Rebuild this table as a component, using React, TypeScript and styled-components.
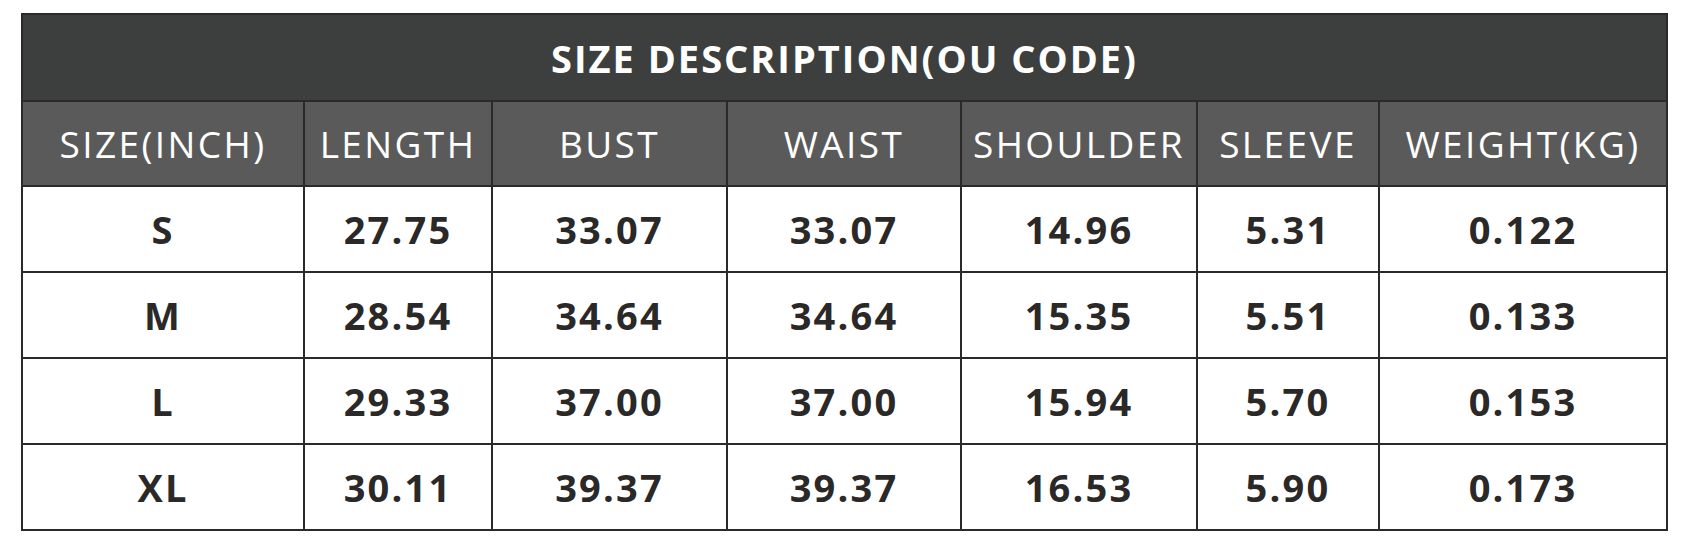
import styled, { createGlobalStyle } from 'styled-components'

const GlobalStyle = createGlobalStyle`
  html, body {
    margin: 0;
    padding: 0;
    background: #fff;
  }
  body {
    font-family: "Open Sans", "Liberation Sans", sans-serif;
  }
`

const Page = styled.div`
  padding: 13px 0 0 21px;
`

const Table = styled.table`
  border-collapse: collapse;
  table-layout: fixed;
  width: 1645px;
  border: 2px solid #2a2a2a;
`

const TitleCell = styled.th`
  height: 85px;
  padding: 0;
  background: #3c3f3d;
  color: #fff;
  font-size: 38px;
  font-weight: 700;
  letter-spacing: 2px;
  text-align: center;
  border-bottom: 2px solid #2a2a2a;
`

const HeadCell = styled.th`
  height: 83px;
  padding: 0;
  background: #5a5a5a;
  color: #fff;
  font-size: 37px;
  font-weight: 400;
  letter-spacing: 2.4px;
  text-align: center;
  white-space: nowrap;
  border: 2px solid #2a2a2a;
`

const Cell = styled.td`
  height: 84px;
  padding: 0;
  color: #2b2828;
  font-size: 38px;
  font-weight: 700;
  letter-spacing: 2.2px;
  text-align: center;
  border: 2px solid #2a2a2a;
`

const widths = [282, 188, 235, 234, 236, 182, 288]
const headers = ['SIZE(INCH)', 'LENGTH', 'BUST', 'WAIST', 'SHOULDER', 'SLEEVE', 'WEIGHT(KG)']
const rows = [
  ['S', '27.75', '33.07', '33.07', '14.96', '5.31', '0.122'],
  ['M', '28.54', '34.64', '34.64', '15.35', '5.51', '0.133'],
  ['L', '29.33', '37.00', '37.00', '15.94', '5.70', '0.153'],
  ['XL', '30.11', '39.37', '39.37', '16.53', '5.90', '0.173'],
]

export default function App() {
  return (
    <>
      <GlobalStyle />
      <Page>
        <Table>
          <colgroup>
            {widths.map((w, i) => (
              <col key={i} style={{ width: w }} />
            ))}
          </colgroup>
          <thead>
            <tr>
              <TitleCell colSpan={7}>SIZE DESCRIPTION(OU CODE)</TitleCell>
            </tr>
            <tr>
              {headers.map(h => (
                <HeadCell key={h}>{h}</HeadCell>
              ))}
            </tr>
          </thead>
          <tbody>
            {rows.map(r => (
              <tr key={r[0]}>
                {r.map((v, i) => (
                  <Cell key={i}>{v}</Cell>
                ))}
              </tr>
            ))}
          </tbody>
        </Table>
      </Page>
    </>
  )
}
